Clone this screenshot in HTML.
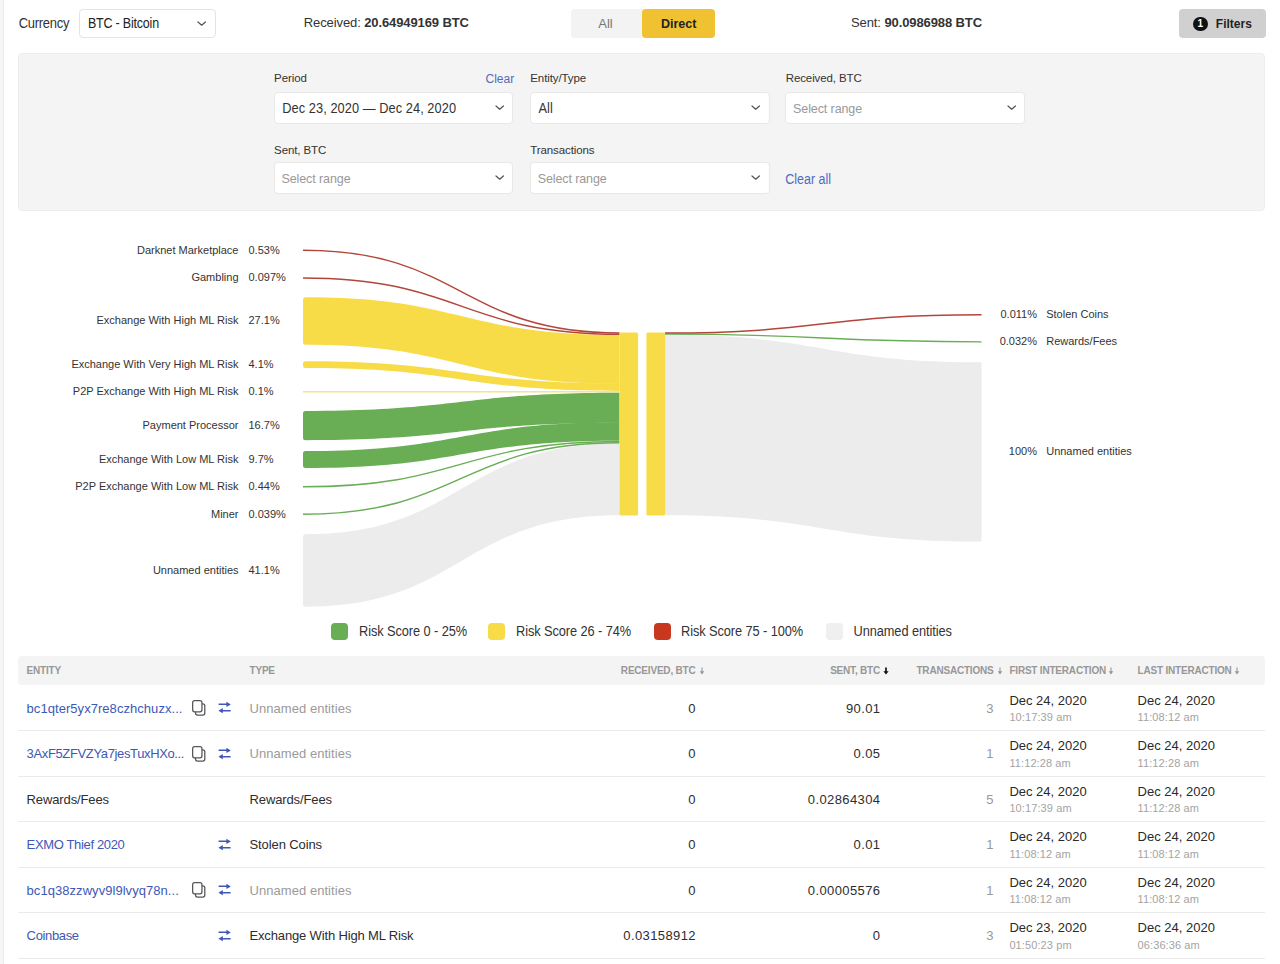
<!DOCTYPE html>
<html><head><meta charset="utf-8"><title>Sankey</title>
<style>
html,body{margin:0;padding:0;width:1280px;height:964px;overflow:hidden;background:#fff;}
body{position:relative;font-family:"Liberation Sans", sans-serif;}
.t{position:absolute;white-space:nowrap;font-family:"Liberation Sans", sans-serif;}
.r{position:absolute;}
</style></head><body>
<div class="r" style="left:0px;top:0px;width:3.00px;height:964.00px;background:#f6f6f6;border-radius:0px;"></div>
<div class="r" style="left:3px;top:0px;width:1.00px;height:964.00px;background:#ebebeb;border-radius:0px;"></div>
<div class="t" style="left:18.75px;top:16.60px;font-size:13px;line-height:13px;font-weight:400;color:#333;letter-spacing:-0.3px;transform:scaleY(1.09);transform-origin:0 11.00px;">Currency</div>
<div class="r" style="left:79px;top:9px;width:137.00px;height:29.00px;background:#fff;border-radius:4px;border:1px solid #e4e4e4;box-sizing:border-box;"></div>
<div class="t" style="left:87.90px;top:18.02px;font-size:12.5px;line-height:12.5px;font-weight:400;color:#222;letter-spacing:-0.2px;transform:scaleY(1.11);transform-origin:0 10.58px;">BTC - Bitcoin</div>
<svg class="r" style="left:195.50px;top:19.60px" width="11.4" height="7.2"><path d="M2 2 L5.70 5.20 L9.40 2" fill="none" stroke="#555" stroke-width="1.25" stroke-linecap="round" stroke-linejoin="round"/></svg>
<div class="t" style="left:303.75px;top:15.90px;font-size:13px;line-height:13px;font-weight:400;color:#333;letter-spacing:-0.1px;">Received: <b style="font-weight:700">20.64949169 BTC</b></div>
<div class="r" style="left:571px;top:9px;width:144.00px;height:29.00px;background:#f3f3f3;border-radius:4px;"></div>
<div class="r" style="left:642px;top:9px;width:73.00px;height:29.00px;background:#f0c232;border-radius:4px;"></div>
<div class="t" style="left:305.50px;width:600px;text-align:center;top:16.90px;font-size:13px;line-height:13px;font-weight:400;color:#777;transform:scaleY(1.05);transform-origin:0 11.00px;">All</div>
<div class="t" style="left:378.60px;width:600px;text-align:center;top:18.32px;font-size:12.5px;line-height:12.5px;font-weight:700;color:#222;transform:scaleY(1.08);transform-origin:0 10.58px;">Direct</div>
<div class="t" style="left:851.00px;top:15.90px;font-size:13px;line-height:13px;font-weight:400;color:#333;letter-spacing:-0.1px;">Sent: <b style="font-weight:700">90.0986988 BTC</b></div>
<div class="r" style="left:1179px;top:9px;width:87.00px;height:29.00px;background:#d0d0d0;border-radius:4px;"></div>
<div class="r" style="left:1193px;top:16.6px;width:14.5px;height:14.5px;border-radius:50%;background:#111;color:#fff;font-size:10px;line-height:14.5px;text-align:center;font-weight:700">1</div>
<div class="t" style="left:1215.80px;top:17.64px;font-size:12px;line-height:12px;font-weight:700;color:#222;transform:scaleY(1.13);transform-origin:0 10.16px;">Filters</div>
<div class="r" style="left:18px;top:53px;width:1247.00px;height:158.00px;background:#f4f4f4;border-radius:4px;border:1px solid #ededed;box-sizing:border-box;"></div>
<div class="t" style="left:274.10px;top:72.67px;font-size:11.5px;line-height:11.5px;font-weight:400;color:#333;letter-spacing:-0.1px;">Period</div>
<div class="t" style="right:765.80px;top:73.24px;font-size:12px;line-height:12px;font-weight:400;color:#4f6bbf;">Clear</div>
<div class="r" style="left:273.6px;top:91.6px;width:239.60px;height:32.00px;background:#fff;border-radius:4px;border:1px solid #e8e8e8;box-sizing:border-box;"></div>
<div class="t" style="left:282.30px;top:103.16px;font-size:12.8px;line-height:12.8px;font-weight:400;color:#333;letter-spacing:0.06px;transform:scaleY(1.08);transform-origin:0 10.84px;">Dec 23, 2020 — Dec 24, 2020</div>
<svg class="r" style="left:493.50px;top:103.70px" width="11.4" height="7.2"><path d="M2 2 L5.70 5.20 L9.40 2" fill="none" stroke="#555" stroke-width="1.25" stroke-linecap="round" stroke-linejoin="round"/></svg>
<div class="t" style="left:530.30px;top:72.67px;font-size:11.5px;line-height:11.5px;font-weight:400;color:#333;letter-spacing:-0.1px;">Entity/Type</div>
<div class="r" style="left:529.8px;top:91.6px;width:239.80px;height:32.00px;background:#fff;border-radius:4px;border:1px solid #e8e8e8;box-sizing:border-box;"></div>
<div class="t" style="left:538.50px;top:103.16px;font-size:12.8px;line-height:12.8px;font-weight:400;color:#333;letter-spacing:0.06px;transform:scaleY(1.08);transform-origin:0 10.84px;">All</div>
<svg class="r" style="left:749.90px;top:103.70px" width="11.4" height="7.2"><path d="M2 2 L5.70 5.20 L9.40 2" fill="none" stroke="#555" stroke-width="1.25" stroke-linecap="round" stroke-linejoin="round"/></svg>
<div class="t" style="left:785.70px;top:72.67px;font-size:11.5px;line-height:11.5px;font-weight:400;color:#333;letter-spacing:-0.1px;">Received, BTC</div>
<div class="r" style="left:785.2px;top:91.6px;width:240.10px;height:32.00px;background:#fff;border-radius:4px;border:1px solid #e8e8e8;box-sizing:border-box;"></div>
<div class="t" style="left:793.10px;top:103.42px;font-size:12.5px;line-height:12.5px;font-weight:400;color:#999;letter-spacing:-0.1px;transform:scaleY(1.08);transform-origin:0 10.58px;">Select range</div>
<svg class="r" style="left:1005.60px;top:103.70px" width="11.4" height="7.2"><path d="M2 2 L5.70 5.20 L9.40 2" fill="none" stroke="#555" stroke-width="1.25" stroke-linecap="round" stroke-linejoin="round"/></svg>
<div class="t" style="left:274.10px;top:144.57px;font-size:11.5px;line-height:11.5px;font-weight:400;color:#333;letter-spacing:-0.1px;">Sent, BTC</div>
<div class="r" style="left:273.6px;top:162.4px;width:239.60px;height:32.00px;background:#fff;border-radius:4px;border:1px solid #e8e8e8;box-sizing:border-box;"></div>
<div class="t" style="left:281.50px;top:173.42px;font-size:12.5px;line-height:12.5px;font-weight:400;color:#999;letter-spacing:-0.1px;transform:scaleY(1.08);transform-origin:0 10.58px;">Select range</div>
<svg class="r" style="left:493.50px;top:174.10px" width="11.4" height="7.2"><path d="M2 2 L5.70 5.20 L9.40 2" fill="none" stroke="#555" stroke-width="1.25" stroke-linecap="round" stroke-linejoin="round"/></svg>
<div class="t" style="left:530.30px;top:144.57px;font-size:11.5px;line-height:11.5px;font-weight:400;color:#333;letter-spacing:-0.1px;">Transactions</div>
<div class="r" style="left:529.8px;top:162.4px;width:239.80px;height:32.00px;background:#fff;border-radius:4px;border:1px solid #e8e8e8;box-sizing:border-box;"></div>
<div class="t" style="left:537.70px;top:173.42px;font-size:12.5px;line-height:12.5px;font-weight:400;color:#999;letter-spacing:-0.1px;transform:scaleY(1.08);transform-origin:0 10.58px;">Select range</div>
<svg class="r" style="left:749.90px;top:174.10px" width="11.4" height="7.2"><path d="M2 2 L5.70 5.20 L9.40 2" fill="none" stroke="#555" stroke-width="1.25" stroke-linecap="round" stroke-linejoin="round"/></svg>
<div class="t" style="left:785.20px;top:173.92px;font-size:12.5px;line-height:12.5px;font-weight:400;color:#4f6bbf;transform:scaleY(1.1);transform-origin:0 10.58px;">Clear all</div>
<svg class="r" style="left:0;top:0" width="1280" height="964"><path d="M305.5,534.2 C461.25,534.2 461.25,443.3 619.5,443.3 L619.5,515.3 C461.25,515.3 461.25,606.8 305.5,606.8 A2.5,2.5 0 0 1 303,604.3 L303,536.7 A2.5,2.5 0 0 1 305.5,534.2 Z" fill="#ececec"/><path d="M665,334.8 C823.25,334.8 823.25,362.3 981.5,362.3 L981.5,541.6 C823.25,541.6 823.25,515.3 665,515.3 Z" fill="#ececec"/><path d="M305.5,297.2 C461.25,297.2 461.25,334.9 619.5,334.9 L619.5,383.8 C461.25,383.8 461.25,344.7 305.5,344.7 A2.5,2.5 0 0 1 303,342.2 L303,299.7 A2.5,2.5 0 0 1 305.5,297.2 Z" fill="#f7dc48"/><path d="M305.5,361.2 C461.25,361.2 461.25,383.4 619.5,383.4 L619.5,390.9 C461.25,390.9 461.25,367.9 305.5,367.9 A2.5,2.5 0 0 1 303,365.4 L303,363.7 A2.5,2.5 0 0 1 305.5,361.2 Z" fill="#f7dc48"/><path d="M303,391.8 C461.25,391.8 461.25,391.7 619.5,391.7" fill="none" stroke="#f4e48e" stroke-width="1.6"/><path d="M305.5,411 C461.25,411 461.25,392.8 619.5,392.8 L619.5,422.7 C461.25,422.7 461.25,440.2 305.5,440.2 A2.5,2.5 0 0 1 303,437.7 L303,413.5 A2.5,2.5 0 0 1 305.5,411 Z" fill="#69ad55"/><path d="M305.5,451 C461.25,451 461.25,422.3 619.5,422.3 L619.5,440.7 C461.25,440.7 461.25,468 305.5,468 A2.5,2.5 0 0 1 303,465.5 L303,453.5 A2.5,2.5 0 0 1 305.5,451 Z" fill="#69ad55"/><path d="M303,486.8 C461.25,486.8 461.25,441.5 619.5,441.5" fill="none" stroke="#69ad55" stroke-width="1.4"/><path d="M303,514.2 C461.25,514.2 461.25,442.7 619.5,442.7" fill="none" stroke="#69ad55" stroke-width="1.4"/><path d="M303,250.2 C461.25,250.2 461.25,333.0 619.5,333.0" fill="none" stroke="#b3463a" stroke-width="1.45"/><path d="M303,278.0 C461.25,278.0 461.25,334.3 619.5,334.3" fill="none" stroke="#b3463a" stroke-width="1.45"/><path d="M665,334.2 C823.25,334.2 823.25,341.8 981.5,341.8" fill="none" stroke="#69ad55" stroke-width="1.3"/><path d="M665,333.0 C823.25,333.0 823.25,314.7 981.5,314.7" fill="none" stroke="#b3463a" stroke-width="1.5"/><rect x="619.5" y="332.4" width="18.6" height="183" rx="1.5" fill="#f7dc48"/><rect x="646.4" y="332.4" width="18.7" height="183" rx="1.5" fill="#f7dc48"/></svg>
<div class="t" style="right:1041.50px;top:244.69px;font-size:11px;line-height:11px;font-weight:400;color:#333;">Darknet Marketplace</div>
<div class="t" style="left:248.50px;top:244.69px;font-size:11px;line-height:11px;font-weight:400;color:#333;">0.53%</div>
<div class="t" style="right:1041.50px;top:272.49px;font-size:11px;line-height:11px;font-weight:400;color:#333;">Gambling</div>
<div class="t" style="left:248.50px;top:272.49px;font-size:11px;line-height:11px;font-weight:400;color:#333;">0.097%</div>
<div class="t" style="right:1041.50px;top:315.49px;font-size:11px;line-height:11px;font-weight:400;color:#333;">Exchange With High ML Risk</div>
<div class="t" style="left:248.50px;top:315.49px;font-size:11px;line-height:11px;font-weight:400;color:#333;">27.1%</div>
<div class="t" style="right:1041.50px;top:358.99px;font-size:11px;line-height:11px;font-weight:400;color:#333;">Exchange With Very High ML Risk</div>
<div class="t" style="left:248.50px;top:358.99px;font-size:11px;line-height:11px;font-weight:400;color:#333;">4.1%</div>
<div class="t" style="right:1041.50px;top:386.29px;font-size:11px;line-height:11px;font-weight:400;color:#333;">P2P Exchange With High ML Risk</div>
<div class="t" style="left:248.50px;top:386.29px;font-size:11px;line-height:11px;font-weight:400;color:#333;">0.1%</div>
<div class="t" style="right:1041.50px;top:420.09px;font-size:11px;line-height:11px;font-weight:400;color:#333;">Payment Processor</div>
<div class="t" style="left:248.50px;top:420.09px;font-size:11px;line-height:11px;font-weight:400;color:#333;">16.7%</div>
<div class="t" style="right:1041.50px;top:453.99px;font-size:11px;line-height:11px;font-weight:400;color:#333;">Exchange With Low ML Risk</div>
<div class="t" style="left:248.50px;top:453.99px;font-size:11px;line-height:11px;font-weight:400;color:#333;">9.7%</div>
<div class="t" style="right:1041.50px;top:481.29px;font-size:11px;line-height:11px;font-weight:400;color:#333;">P2P Exchange With Low ML Risk</div>
<div class="t" style="left:248.50px;top:481.29px;font-size:11px;line-height:11px;font-weight:400;color:#333;">0.44%</div>
<div class="t" style="right:1041.50px;top:508.69px;font-size:11px;line-height:11px;font-weight:400;color:#333;">Miner</div>
<div class="t" style="left:248.50px;top:508.69px;font-size:11px;line-height:11px;font-weight:400;color:#333;">0.039%</div>
<div class="t" style="right:1041.50px;top:564.99px;font-size:11px;line-height:11px;font-weight:400;color:#333;">Unnamed entities</div>
<div class="t" style="left:248.50px;top:564.99px;font-size:11px;line-height:11px;font-weight:400;color:#333;">41.1%</div>
<div class="t" style="right:243.00px;top:309.19px;font-size:11px;line-height:11px;font-weight:400;color:#333;">0.011%</div>
<div class="t" style="left:1046.20px;top:309.19px;font-size:11px;line-height:11px;font-weight:400;color:#333;">Stolen Coins</div>
<div class="t" style="right:243.00px;top:336.29px;font-size:11px;line-height:11px;font-weight:400;color:#333;">0.032%</div>
<div class="t" style="left:1046.20px;top:336.29px;font-size:11px;line-height:11px;font-weight:400;color:#333;">Rewards/Fees</div>
<div class="t" style="right:243.00px;top:446.49px;font-size:11px;line-height:11px;font-weight:400;color:#333;">100%</div>
<div class="t" style="left:1046.20px;top:446.49px;font-size:11px;line-height:11px;font-weight:400;color:#333;">Unnamed entities</div>
<div class="r" style="left:331px;top:623.2px;width:17.20px;height:17.20px;background:#69ad55;border-radius:4px;"></div>
<div class="t" style="left:359.00px;top:625.86px;font-size:12.8px;line-height:12.8px;font-weight:400;color:#333;letter-spacing:-0.08px;transform:scaleY(1.1);transform-origin:0 10.84px;">Risk Score 0 - 25%</div>
<div class="r" style="left:488px;top:623.2px;width:17.20px;height:17.20px;background:#f7dc48;border-radius:4px;"></div>
<div class="t" style="left:516.00px;top:625.86px;font-size:12.8px;line-height:12.8px;font-weight:400;color:#333;letter-spacing:-0.08px;transform:scaleY(1.1);transform-origin:0 10.84px;">Risk Score 26 - 74%</div>
<div class="r" style="left:653.5px;top:623.2px;width:17.20px;height:17.20px;background:#c8381f;border-radius:4px;"></div>
<div class="t" style="left:681.00px;top:625.86px;font-size:12.8px;line-height:12.8px;font-weight:400;color:#333;letter-spacing:-0.08px;transform:scaleY(1.1);transform-origin:0 10.84px;">Risk Score 75 - 100%</div>
<div class="r" style="left:826px;top:623.2px;width:17.20px;height:17.20px;background:#efefef;border-radius:4px;"></div>
<div class="t" style="left:853.50px;top:625.86px;font-size:12.8px;line-height:12.8px;font-weight:400;color:#333;letter-spacing:-0.08px;transform:scaleY(1.1);transform-origin:0 10.84px;">Unnamed entities</div>
<div class="r" style="left:18px;top:656px;width:1247.00px;height:29.00px;background:#f4f4f4;border-radius:4px;"></div>
<div class="t" style="left:26.60px;top:665.93px;font-size:10px;line-height:10px;font-weight:700;color:#979797;letter-spacing:-0.2px;transform:scaleY(1.1);transform-origin:0 8.46px;">ENTITY</div>
<div class="t" style="left:249.50px;top:665.93px;font-size:10px;line-height:10px;font-weight:700;color:#979797;letter-spacing:-0.2px;transform:scaleY(1.1);transform-origin:0 8.46px;">TYPE</div>
<div class="t" style="right:584.50px;top:665.93px;font-size:10px;line-height:10px;font-weight:700;color:#979797;letter-spacing:-0.2px;transform:scaleY(1.1);transform-origin:0 8.46px;">RECEIVED, BTC</div>
<svg class="r" style="left:698.60px;top:666.80px" width="6" height="8"><path d="M3 0.4 V5" fill="none" stroke="#979797" stroke-width="1.1"/><path d="M0.70 4.3 L5.30 4.3 L3 7.6 Z" fill="#979797"/></svg>
<div class="t" style="right:400.00px;top:665.93px;font-size:10px;line-height:10px;font-weight:700;color:#979797;letter-spacing:-0.2px;transform:scaleY(1.1);transform-origin:0 8.46px;">SENT, BTC</div>
<svg class="r" style="left:883.20px;top:666.80px" width="6" height="8"><path d="M3 0.4 V5" fill="none" stroke="#111" stroke-width="1.7"/><path d="M0.40 4.3 L5.60 4.3 L3 7.6 Z" fill="#111"/></svg>
<div class="t" style="right:286.50px;top:665.93px;font-size:10px;line-height:10px;font-weight:700;color:#979797;letter-spacing:-0.2px;transform:scaleY(1.15);transform-origin:0 8.46px;">TRANSACTIONS</div>
<svg class="r" style="left:996.60px;top:666.80px" width="6" height="8"><path d="M3 0.4 V5" fill="none" stroke="#979797" stroke-width="1.1"/><path d="M0.70 4.3 L5.30 4.3 L3 7.6 Z" fill="#979797"/></svg>
<div class="t" style="left:1009.40px;top:665.93px;font-size:10px;line-height:10px;font-weight:700;color:#979797;letter-spacing:-0.2px;transform:scaleY(1.1);transform-origin:0 8.46px;">FIRST INTERACTION</div>
<svg class="r" style="left:1108.20px;top:666.80px" width="6" height="8"><path d="M3 0.4 V5" fill="none" stroke="#979797" stroke-width="1.1"/><path d="M0.70 4.3 L5.30 4.3 L3 7.6 Z" fill="#979797"/></svg>
<div class="t" style="left:1137.60px;top:665.93px;font-size:10px;line-height:10px;font-weight:700;color:#979797;letter-spacing:-0.2px;transform:scaleY(1.1);transform-origin:0 8.46px;">LAST INTERACTION</div>
<svg class="r" style="left:1233.50px;top:666.80px" width="6" height="8"><path d="M3 0.4 V5" fill="none" stroke="#979797" stroke-width="1.1"/><path d="M0.70 4.3 L5.30 4.3 L3 7.6 Z" fill="#979797"/></svg>
<div class="r" style="left:18px;top:730.0px;width:1247.00px;height:1.00px;background:#ebebeb;border-radius:0px;"></div>
<div class="t" style="left:26.60px;top:701.95px;font-size:13px;line-height:13px;font-weight:400;color:#4058b5;letter-spacing:0.05px;">bc1qter5yx7re8czhchuzx...</div>
<svg class="r" style="left:217.5px;top:701.45px" width="14" height="14"><path d="M0.6 3.35 H9.2 M12.6 9.65 H4" fill="none" stroke="#4058b5" stroke-width="1.5"/><path d="M8.4 0.8 L12.8 3.4 L8.4 6 Z M4.8 7.05 L0.4 9.65 L4.8 12.25 Z" fill="#4058b5"/></svg>
<svg class="r" style="left:191.9px;top:700.25px" width="16" height="18"><rect x="3.5" y="3.8" width="9.3" height="11.2" rx="2" fill="#fff" stroke="#555" stroke-width="1.25"/><rect x="0.65" y="0.65" width="9.3" height="11.2" rx="2" fill="#fff" stroke="#555" stroke-width="1.25"/></svg>
<div class="t" style="left:249.50px;top:701.95px;font-size:13px;line-height:13px;font-weight:400;color:#9a9a9a;letter-spacing:0.05px;">Unnamed entities</div>
<div class="t" style="right:584.00px;top:701.95px;font-size:13px;line-height:13px;font-weight:400;color:#2d2d2d;letter-spacing:0.4px;">0</div>
<div class="t" style="right:399.50px;top:701.95px;font-size:13px;line-height:13px;font-weight:400;color:#2d2d2d;letter-spacing:0.4px;">90.01</div>
<div class="t" style="right:286.50px;top:701.95px;font-size:13px;line-height:13px;font-weight:400;color:#999;">3</div>
<div class="t" style="left:1009.40px;top:693.75px;font-size:13px;line-height:13px;font-weight:400;color:#2a2a2a;transform:scaleY(1.05);transform-origin:0 11.00px;">Dec 24, 2020</div>
<div class="t" style="left:1009.40px;top:712.04px;font-size:11px;line-height:11px;font-weight:400;color:#a3a3a3;letter-spacing:0.1px;">10:17:39 am</div>
<div class="t" style="left:1137.60px;top:693.75px;font-size:13px;line-height:13px;font-weight:400;color:#2a2a2a;transform:scaleY(1.05);transform-origin:0 11.00px;">Dec 24, 2020</div>
<div class="t" style="left:1137.60px;top:712.04px;font-size:11px;line-height:11px;font-weight:400;color:#a3a3a3;letter-spacing:0.1px;">11:08:12 am</div>
<div class="r" style="left:18px;top:775.5px;width:1247.00px;height:1.00px;background:#ebebeb;border-radius:0px;"></div>
<div class="t" style="left:26.60px;top:747.45px;font-size:13px;line-height:13px;font-weight:400;color:#4058b5;letter-spacing:-0.36px;">3AxF5ZFVZYa7jesTuxHXo...</div>
<svg class="r" style="left:217.5px;top:746.95px" width="14" height="14"><path d="M0.6 3.35 H9.2 M12.6 9.65 H4" fill="none" stroke="#4058b5" stroke-width="1.5"/><path d="M8.4 0.8 L12.8 3.4 L8.4 6 Z M4.8 7.05 L0.4 9.65 L4.8 12.25 Z" fill="#4058b5"/></svg>
<svg class="r" style="left:191.9px;top:745.75px" width="16" height="18"><rect x="3.5" y="3.8" width="9.3" height="11.2" rx="2" fill="#fff" stroke="#555" stroke-width="1.25"/><rect x="0.65" y="0.65" width="9.3" height="11.2" rx="2" fill="#fff" stroke="#555" stroke-width="1.25"/></svg>
<div class="t" style="left:249.50px;top:747.45px;font-size:13px;line-height:13px;font-weight:400;color:#9a9a9a;letter-spacing:0.05px;">Unnamed entities</div>
<div class="t" style="right:584.00px;top:747.45px;font-size:13px;line-height:13px;font-weight:400;color:#2d2d2d;letter-spacing:0.4px;">0</div>
<div class="t" style="right:399.50px;top:747.45px;font-size:13px;line-height:13px;font-weight:400;color:#2d2d2d;letter-spacing:0.4px;">0.05</div>
<div class="t" style="right:286.50px;top:747.45px;font-size:13px;line-height:13px;font-weight:400;color:#999;">1</div>
<div class="t" style="left:1009.40px;top:739.25px;font-size:13px;line-height:13px;font-weight:400;color:#2a2a2a;transform:scaleY(1.05);transform-origin:0 11.00px;">Dec 24, 2020</div>
<div class="t" style="left:1009.40px;top:757.54px;font-size:11px;line-height:11px;font-weight:400;color:#a3a3a3;letter-spacing:0.1px;">11:12:28 am</div>
<div class="t" style="left:1137.60px;top:739.25px;font-size:13px;line-height:13px;font-weight:400;color:#2a2a2a;transform:scaleY(1.05);transform-origin:0 11.00px;">Dec 24, 2020</div>
<div class="t" style="left:1137.60px;top:757.54px;font-size:11px;line-height:11px;font-weight:400;color:#a3a3a3;letter-spacing:0.1px;">11:12:28 am</div>
<div class="r" style="left:18px;top:821.0px;width:1247.00px;height:1.00px;background:#ebebeb;border-radius:0px;"></div>
<div class="t" style="left:26.60px;top:792.95px;font-size:13px;line-height:13px;font-weight:400;color:#2d2d2d;letter-spacing:-0.12px;">Rewards/Fees</div>
<div class="t" style="left:249.50px;top:792.95px;font-size:13px;line-height:13px;font-weight:400;color:#2d2d2d;letter-spacing:-0.12px;">Rewards/Fees</div>
<div class="t" style="right:584.00px;top:792.95px;font-size:13px;line-height:13px;font-weight:400;color:#2d2d2d;letter-spacing:0.4px;">0</div>
<div class="t" style="right:399.50px;top:792.95px;font-size:13px;line-height:13px;font-weight:400;color:#2d2d2d;letter-spacing:0.4px;">0.02864304</div>
<div class="t" style="right:286.50px;top:792.95px;font-size:13px;line-height:13px;font-weight:400;color:#999;">5</div>
<div class="t" style="left:1009.40px;top:784.75px;font-size:13px;line-height:13px;font-weight:400;color:#2a2a2a;transform:scaleY(1.05);transform-origin:0 11.00px;">Dec 24, 2020</div>
<div class="t" style="left:1009.40px;top:803.04px;font-size:11px;line-height:11px;font-weight:400;color:#a3a3a3;letter-spacing:0.1px;">10:17:39 am</div>
<div class="t" style="left:1137.60px;top:784.75px;font-size:13px;line-height:13px;font-weight:400;color:#2a2a2a;transform:scaleY(1.05);transform-origin:0 11.00px;">Dec 24, 2020</div>
<div class="t" style="left:1137.60px;top:803.04px;font-size:11px;line-height:11px;font-weight:400;color:#a3a3a3;letter-spacing:0.1px;">11:12:28 am</div>
<div class="r" style="left:18px;top:866.5px;width:1247.00px;height:1.00px;background:#ebebeb;border-radius:0px;"></div>
<div class="t" style="left:26.60px;top:838.45px;font-size:13px;line-height:13px;font-weight:400;color:#4058b5;letter-spacing:-0.35px;">EXMO Thief 2020</div>
<svg class="r" style="left:217.5px;top:837.95px" width="14" height="14"><path d="M0.6 3.35 H9.2 M12.6 9.65 H4" fill="none" stroke="#4058b5" stroke-width="1.5"/><path d="M8.4 0.8 L12.8 3.4 L8.4 6 Z M4.8 7.05 L0.4 9.65 L4.8 12.25 Z" fill="#4058b5"/></svg>
<div class="t" style="left:249.50px;top:838.45px;font-size:13px;line-height:13px;font-weight:400;color:#2d2d2d;letter-spacing:-0.1px;">Stolen Coins</div>
<div class="t" style="right:584.00px;top:838.45px;font-size:13px;line-height:13px;font-weight:400;color:#2d2d2d;letter-spacing:0.4px;">0</div>
<div class="t" style="right:399.50px;top:838.45px;font-size:13px;line-height:13px;font-weight:400;color:#2d2d2d;letter-spacing:0.4px;">0.01</div>
<div class="t" style="right:286.50px;top:838.45px;font-size:13px;line-height:13px;font-weight:400;color:#999;">1</div>
<div class="t" style="left:1009.40px;top:830.25px;font-size:13px;line-height:13px;font-weight:400;color:#2a2a2a;transform:scaleY(1.05);transform-origin:0 11.00px;">Dec 24, 2020</div>
<div class="t" style="left:1009.40px;top:848.54px;font-size:11px;line-height:11px;font-weight:400;color:#a3a3a3;letter-spacing:0.1px;">11:08:12 am</div>
<div class="t" style="left:1137.60px;top:830.25px;font-size:13px;line-height:13px;font-weight:400;color:#2a2a2a;transform:scaleY(1.05);transform-origin:0 11.00px;">Dec 24, 2020</div>
<div class="t" style="left:1137.60px;top:848.54px;font-size:11px;line-height:11px;font-weight:400;color:#a3a3a3;letter-spacing:0.1px;">11:08:12 am</div>
<div class="r" style="left:18px;top:912.0px;width:1247.00px;height:1.00px;background:#ebebeb;border-radius:0px;"></div>
<div class="t" style="left:26.60px;top:883.95px;font-size:13px;line-height:13px;font-weight:400;color:#4058b5;letter-spacing:0.05px;">bc1q38zzwyv9l9lvyq78n...</div>
<svg class="r" style="left:217.5px;top:883.45px" width="14" height="14"><path d="M0.6 3.35 H9.2 M12.6 9.65 H4" fill="none" stroke="#4058b5" stroke-width="1.5"/><path d="M8.4 0.8 L12.8 3.4 L8.4 6 Z M4.8 7.05 L0.4 9.65 L4.8 12.25 Z" fill="#4058b5"/></svg>
<svg class="r" style="left:191.9px;top:882.25px" width="16" height="18"><rect x="3.5" y="3.8" width="9.3" height="11.2" rx="2" fill="#fff" stroke="#555" stroke-width="1.25"/><rect x="0.65" y="0.65" width="9.3" height="11.2" rx="2" fill="#fff" stroke="#555" stroke-width="1.25"/></svg>
<div class="t" style="left:249.50px;top:883.95px;font-size:13px;line-height:13px;font-weight:400;color:#9a9a9a;letter-spacing:0.05px;">Unnamed entities</div>
<div class="t" style="right:584.00px;top:883.95px;font-size:13px;line-height:13px;font-weight:400;color:#2d2d2d;letter-spacing:0.4px;">0</div>
<div class="t" style="right:399.50px;top:883.95px;font-size:13px;line-height:13px;font-weight:400;color:#2d2d2d;letter-spacing:0.4px;">0.00005576</div>
<div class="t" style="right:286.50px;top:883.95px;font-size:13px;line-height:13px;font-weight:400;color:#999;">1</div>
<div class="t" style="left:1009.40px;top:875.75px;font-size:13px;line-height:13px;font-weight:400;color:#2a2a2a;transform:scaleY(1.05);transform-origin:0 11.00px;">Dec 24, 2020</div>
<div class="t" style="left:1009.40px;top:894.04px;font-size:11px;line-height:11px;font-weight:400;color:#a3a3a3;letter-spacing:0.1px;">11:08:12 am</div>
<div class="t" style="left:1137.60px;top:875.75px;font-size:13px;line-height:13px;font-weight:400;color:#2a2a2a;transform:scaleY(1.05);transform-origin:0 11.00px;">Dec 24, 2020</div>
<div class="t" style="left:1137.60px;top:894.04px;font-size:11px;line-height:11px;font-weight:400;color:#a3a3a3;letter-spacing:0.1px;">11:08:12 am</div>
<div class="r" style="left:18px;top:957.5px;width:1247.00px;height:1.00px;background:#ebebeb;border-radius:0px;"></div>
<div class="t" style="left:26.60px;top:929.45px;font-size:13px;line-height:13px;font-weight:400;color:#4058b5;letter-spacing:-0.35px;">Coinbase</div>
<svg class="r" style="left:217.5px;top:928.95px" width="14" height="14"><path d="M0.6 3.35 H9.2 M12.6 9.65 H4" fill="none" stroke="#4058b5" stroke-width="1.5"/><path d="M8.4 0.8 L12.8 3.4 L8.4 6 Z M4.8 7.05 L0.4 9.65 L4.8 12.25 Z" fill="#4058b5"/></svg>
<div class="t" style="left:249.50px;top:929.45px;font-size:13px;line-height:13px;font-weight:400;color:#2d2d2d;letter-spacing:-0.15px;">Exchange With High ML Risk</div>
<div class="t" style="right:584.00px;top:929.45px;font-size:13px;line-height:13px;font-weight:400;color:#2d2d2d;letter-spacing:0.4px;">0.03158912</div>
<div class="t" style="right:399.50px;top:929.45px;font-size:13px;line-height:13px;font-weight:400;color:#2d2d2d;letter-spacing:0.4px;">0</div>
<div class="t" style="right:286.50px;top:929.45px;font-size:13px;line-height:13px;font-weight:400;color:#999;">3</div>
<div class="t" style="left:1009.40px;top:921.25px;font-size:13px;line-height:13px;font-weight:400;color:#2a2a2a;transform:scaleY(1.05);transform-origin:0 11.00px;">Dec 23, 2020</div>
<div class="t" style="left:1009.40px;top:939.54px;font-size:11px;line-height:11px;font-weight:400;color:#a3a3a3;letter-spacing:0.1px;">01:50:23 pm</div>
<div class="t" style="left:1137.60px;top:921.25px;font-size:13px;line-height:13px;font-weight:400;color:#2a2a2a;transform:scaleY(1.05);transform-origin:0 11.00px;">Dec 24, 2020</div>
<div class="t" style="left:1137.60px;top:939.54px;font-size:11px;line-height:11px;font-weight:400;color:#a3a3a3;letter-spacing:0.1px;">06:36:36 am</div>
</body></html>
